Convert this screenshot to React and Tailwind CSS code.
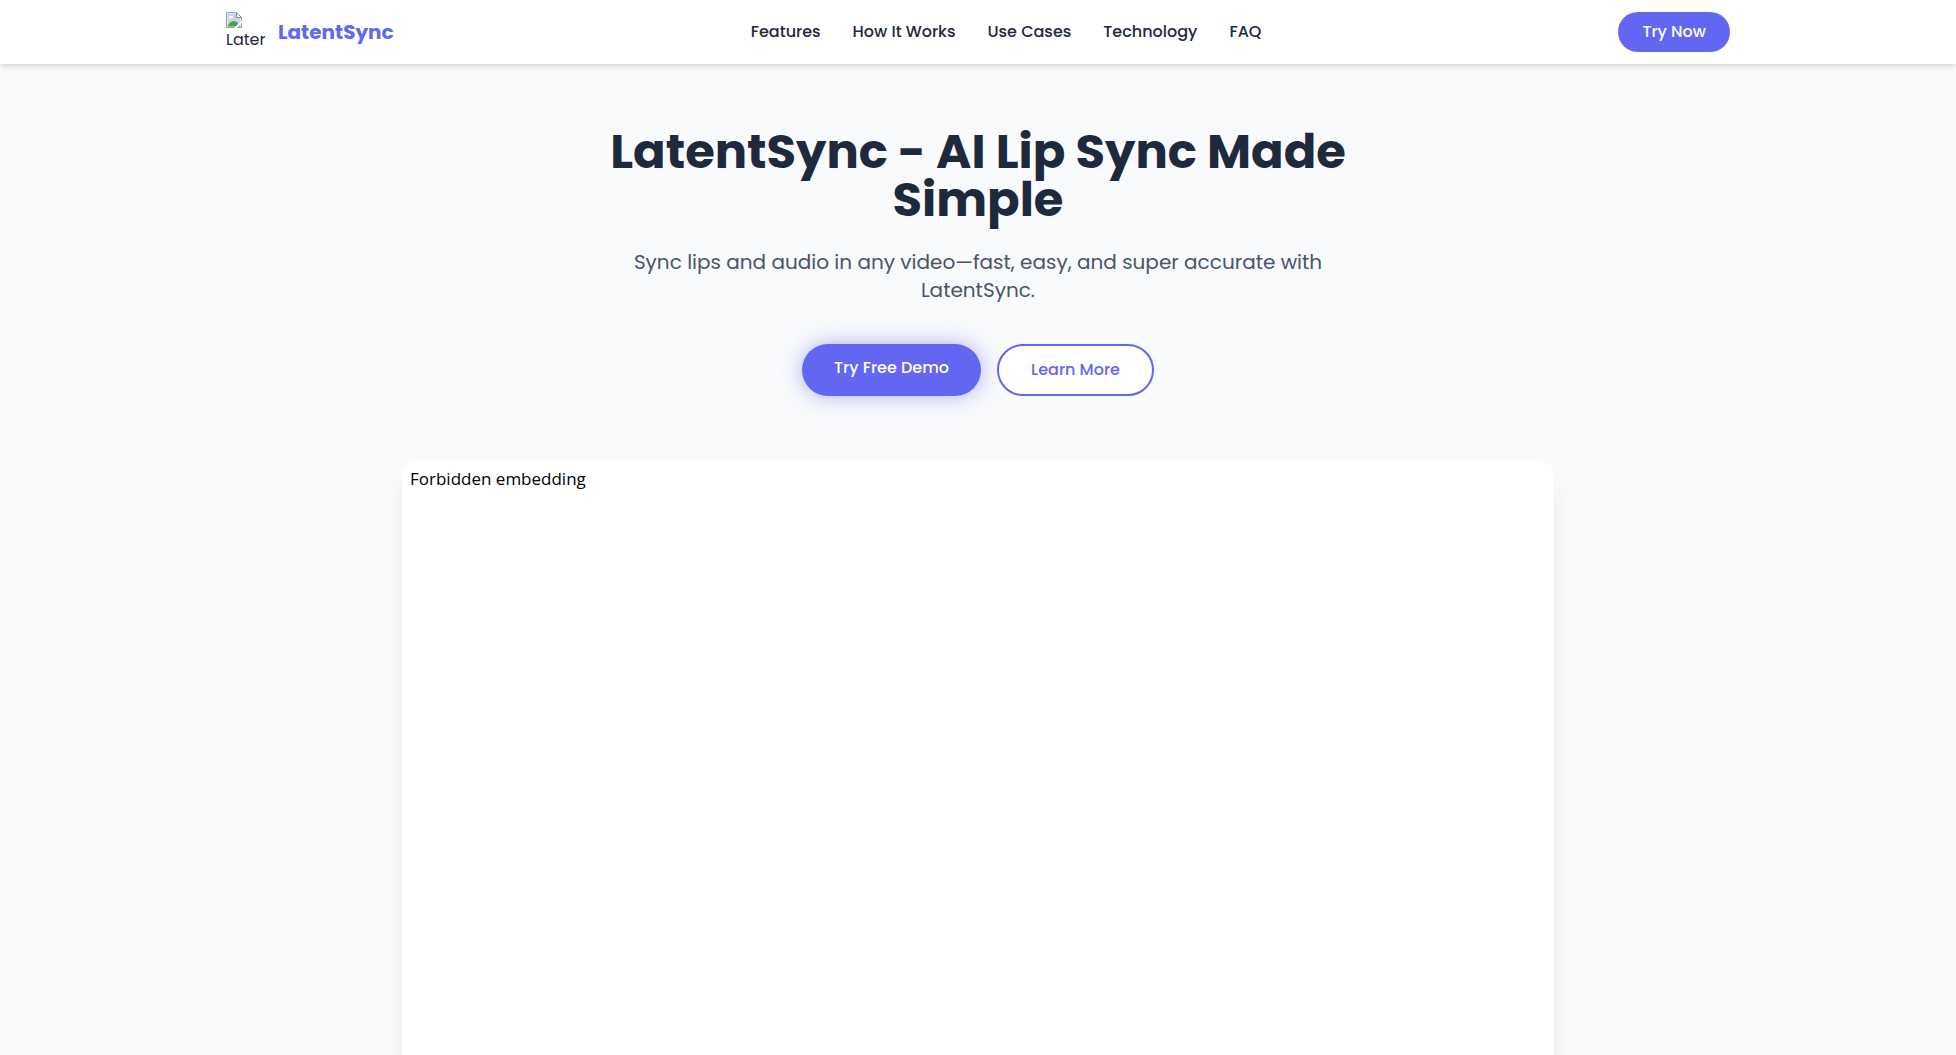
const navItems = [
  { label: "Features", href: "#features" },
  { label: "How It Works", href: "#how-it-works" },
  { label: "Use Cases", href: "#use-cases" },
  { label: "Technology", href: "#technology" },
  { label: "FAQ", href: "#faq" },
];

function BrokenImage() {
  return (
    <svg width="16" height="16" viewBox="0 0 16 16" aria-hidden="true" className="block">
      <path d="M0.5 0.5H10.5L15.5 5.5V15.5H0.5Z" fill="#fff" stroke="#9a9ea4" />
      <path d="M1.5 1.5H10V6H14.5V14.5H1.5Z" fill="#c0d3f3" />
      <path d="M10.5 0.5V5.5H15.5Z" fill="#fff" stroke="#858a91" />
      <ellipse cx="5" cy="5" rx="2.2" ry="1.3" fill="#fff" />
      <path d="M1.5 14.5C2.5 11.5 5 9 8 9C9.5 9 12 10.5 14.5 14.5Z" fill="#4ea43a" />
      <path d="M8 16L16 8.5V10.5L11 16Z" fill="#fff" />
    </svg>
  );
}

function Header() {
  return (
    <header className="relative z-10 bg-white shadow-md">
      <div className="mx-auto flex h-16 max-w-screen-2xl items-center justify-between px-4">
        <a href="#home" className="flex items-center gap-3">
          <span className="flex h-10 w-10 flex-col whitespace-nowrap text-base leading-6 text-[#1e293b]">
            <BrokenImage />
            <span>Later</span>
          </span>
          <span className="text-xl font-bold text-[#6366f1]">LatentSync</span>
        </a>
        <nav className="flex gap-8 whitespace-nowrap text-base font-medium text-[#1e293b]">
          {navItems.map((item) => (
            <a key={item.label} href={item.href}>
              {item.label}
            </a>
          ))}
        </nav>
        <button type="button" className="rounded-full bg-[#6366f1] px-6 py-2 font-medium text-white">
          Try Now
        </button>
      </div>
    </header>
  );
}

export default function App() {
  return (
    <div className="flex h-screen flex-col overflow-hidden bg-[#f8fafc] font-['Poppins','Inter',sans-serif] text-[#1e293b]">
      <Header />
      <main className="flex flex-1 flex-col px-4 pt-16">
        <section className="mx-auto max-w-3xl text-center">
          <h1 className="mb-6 text-5xl leading-none font-bold">LatentSync - AI Lip Sync Made Simple</h1>
          <p className="mb-10 text-xl leading-7 text-[#475569]">
            Sync lips and audio in any video—fast, easy, and super accurate with LatentSync.
          </p>
          <div className="flex justify-center gap-4 font-medium">
            <a
              href="#demo"
              className="rounded-full bg-[#6366f1] px-8 py-3 text-white shadow-[0_0_20px_rgba(99,102,241,0.5)]"
            >
              Try Free Demo
            </a>
            <a
              href="#features"
              className="rounded-full border-2 border-[#6366f1] bg-white px-8 py-3 text-[#6366f1]"
            >
              Learn More
            </a>
          </div>
        </section>
        <section
          id="demo"
          className="mx-auto mt-16 w-full max-w-6xl flex-1 rounded-t-2xl bg-white p-2 font-['Open_Sans',sans-serif] text-[17px] leading-[22px] text-black shadow-xl"
        >
          Forbidden embedding
        </section>
      </main>
    </div>
  );
}
